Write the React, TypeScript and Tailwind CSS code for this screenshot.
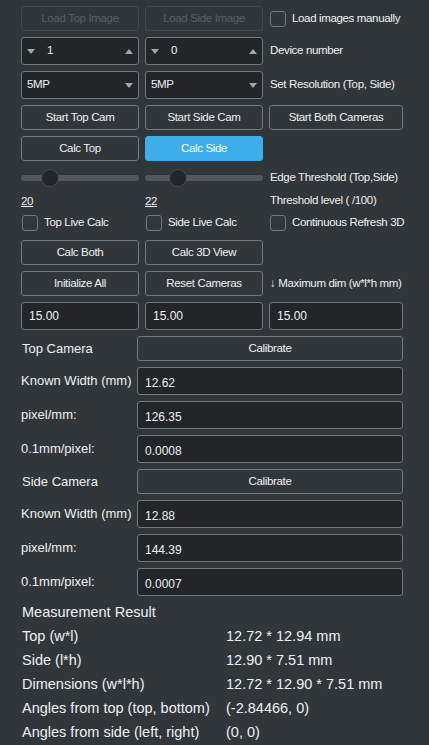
import type { ReactNode } from 'react'

const font = { fontFamily: '"Liberation Sans", Arial, sans-serif' }

const small = 'text-[11.5px] tracking-[-0.35px]'

function Btn({ children, disabled, active }: { children: ReactNode; disabled?: boolean; active?: boolean }) {
  if (active) {
    return (
      <div className={'h-[25px] flex items-center justify-center rounded-[3px] border border-[#3daee9] bg-[#3daee9] text-white whitespace-nowrap ' + small}>
        {children}
      </div>
    )
  }
  return (
    <div
      className={
        (disabled
          ? 'h-[25px] flex items-center justify-center rounded-[3px] border border-[#45494d] text-[#5b5f63] whitespace-nowrap '
          : 'h-[25px] flex items-center justify-center rounded-[3px] border border-[#76797c] bg-[#31363b] text-[#eff0f1] whitespace-nowrap ') + small
      }
    >
      {children}
    </div>
  )
}

function Check({ label }: { label: string }) {
  return (
    <div className="flex items-center gap-[6px] h-[25px] pl-[1px] whitespace-nowrap">
      <div className="w-[16px] h-[16px] shrink-0 rounded-[3px] border border-[#76797c]" />
      <span className={'text-[#eff0f1] ' + small}>{label}</span>
    </div>
  )
}

function Spin({ value }: { value: string }) {
  return (
    <div className={'h-[28px] flex items-center rounded-[3px] border border-[#76797c] bg-[#232629] px-[5px] text-[#eff0f1] ' + small}>
      <svg width="8" height="5" viewBox="0 0 8 5" className="mr-[12px]">
        <path d="M0 0h8L4 5z" fill="#a4a6a8" />
      </svg>
      <span className="flex-1">{value}</span>
      <svg width="8" height="5" viewBox="0 0 8 5">
        <path d="M0 5h8L4 0z" fill="#a4a6a8" />
      </svg>
    </div>
  )
}

function Combo({ value }: { value: string }) {
  return (
    <div className={'h-[28px] flex items-center rounded-[3px] border border-[#76797c] bg-[#232629] pl-[5px] pr-[5px] text-[#eff0f1] ' + small}>
      <span className="flex-1">{value}</span>
      <svg width="8" height="5" viewBox="0 0 8 5">
        <path d="M0 0h8L4 5z" fill="#a4a6a8" />
      </svg>
    </div>
  )
}

function Field({ value, className = '' }: { value: string; className?: string }) {
  return (
    <div className={'h-[28px] flex items-center rounded-[3px] border border-[#76797c] bg-[#232629] px-[7px] text-[12px] text-[#eff0f1] ' + className}>
      {value}
    </div>
  )
}

function Slider({ pos }: { pos: number }) {
  return (
    <div className="relative h-[20px] flex items-center">
      <div className="w-full h-[6px] rounded-full bg-[#54585c]" />
      <div
        className="absolute top-[1px] w-[18px] h-[18px] rounded-full bg-[#232629] border border-[#4a4e52]"
        style={{ left: pos }}
      />
    </div>
  )
}

function Label({ children }: { children: ReactNode }) {
  return <div className={'flex items-center text-[#eff0f1] pl-[1px] whitespace-nowrap ' + small}>{children}</div>
}

function CalRow({ label, value }: { label: string; value: string }) {
  return (
    <div className="flex items-center h-[28px]">
      <div className="w-[116px] shrink-0 text-[13px] text-[#eff0f1] whitespace-nowrap">{label}</div>
      <Field value={value} className="flex-1 pt-[3px]" />
    </div>
  )
}

function CalHead({ label }: { label: string }) {
  return (
    <div className="flex items-center h-[25px]">
      <div className="w-[116px] shrink-0 text-[13px] text-[#eff0f1] pl-[1px] whitespace-nowrap">{label}</div>
      <div className="flex-1">
        <Btn>Calibrate</Btn>
      </div>
    </div>
  )
}

export default function App() {
  const rows: [string, string][] = [
    ['Top (w*l)', '12.72 * 12.94 mm'],
    ['Side (l*h)', '12.90 * 7.51 mm'],
    ['Dimensions (w*l*h)', '12.72 * 12.90 * 7.51 mm'],
    ['Angles from top (top, bottom)', '(-2.84466, 0)'],
    ['Angles from side (left, right)', '(0, 0)'],
  ]

  return (
    <div className="w-[429px] h-[745px] bg-[#31363b] overflow-hidden" style={font}>
      <div className="w-[403px] pl-[21px] pt-[6px]">
        <div className="grid grid-cols-[118px_118px_134px] gap-x-[6px]">
          {/* row 1 */}
          <Btn disabled>Load Top Image</Btn>
          <Btn disabled>Load Side Image</Btn>
          <Check label="Load images manually" />

          {/* device */}
          <div className="col-span-3 h-[6px]" />
          <Spin value="1" />
          <Spin value="0" />
          <Label>Device number</Label>

          {/* resolution */}
          <div className="col-span-3 h-[6px]" />
          <Combo value="5MP" />
          <Combo value="5MP" />
          <Label>Set Resolution (Top, Side)</Label>

          <div className="col-span-3 h-[6px]" />
          <Btn>Start Top Cam</Btn>
          <Btn>Start Side Cam</Btn>
          <Btn>Start Both Cameras</Btn>

          <div className="col-span-3 h-[6px]" />
          <Btn>Calc Top</Btn>
          <Btn active>Calc Side</Btn>
          <div />

          <div className="col-span-3 h-[7px]" />
          <Slider pos={20} />
          <Slider pos={24} />
          <Label>Edge Threshold (Top,Side)</Label>

          <div className="col-span-3 h-[4px]" />
          <div className={'text-[#eff0f1] underline h-[18px] leading-[18px] ' + small}>20</div>
          <div className={'text-[#eff0f1] underline h-[18px] leading-[18px] ' + small}>22</div>
          <Label>Threshold level ( /100)</Label>

          <Check label="Top Live Calc" />
          <Check label="Side Live Calc" />
          <Check label="Continuous Refresh 3D" />

          <div className="col-span-3 h-[5px]" />
          <Btn>Calc Both</Btn>
          <Btn>Calc 3D View</Btn>
          <div />

          <div className="col-span-3 h-[6px]" />
          <Btn>Initialize All</Btn>
          <Btn>Reset Cameras</Btn>
          <Label>↓ Maximum dim (w*l*h mm)</Label>

          <div className="col-span-3 h-[6px]" />
          <Field value="15.00" />
          <Field value="15.00" />
          <Field value="15.00" />
        </div>

        <div className="flex flex-col gap-[6px] mt-[6px]">
          <CalHead label="Top Camera" />
          <CalRow label="Known Width (mm)" value="12.62" />
          <CalRow label="pixel/mm:" value="126.35" />
          <CalRow label="0.1mm/pixel:" value="0.0008" />
          <CalHead label="Side Camera" />
          <CalRow label="Known Width (mm)" value="12.88" />
          <CalRow label="pixel/mm:" value="144.39" />
          <CalRow label="0.1mm/pixel:" value="0.0007" />
        </div>

        <div className="mt-[5px] text-[14.5px] text-[#eff0f1] pl-[1px] whitespace-nowrap">
          <div className="h-[24px] flex items-center">Measurement Result</div>
          {rows.map(([k, v]) => (
            <div key={k} className="h-[24px] flex items-center">
              <div className="w-[204px] shrink-0">{k}</div>
              <div>{v}</div>
            </div>
          ))}
        </div>
      </div>
    </div>
  )
}
